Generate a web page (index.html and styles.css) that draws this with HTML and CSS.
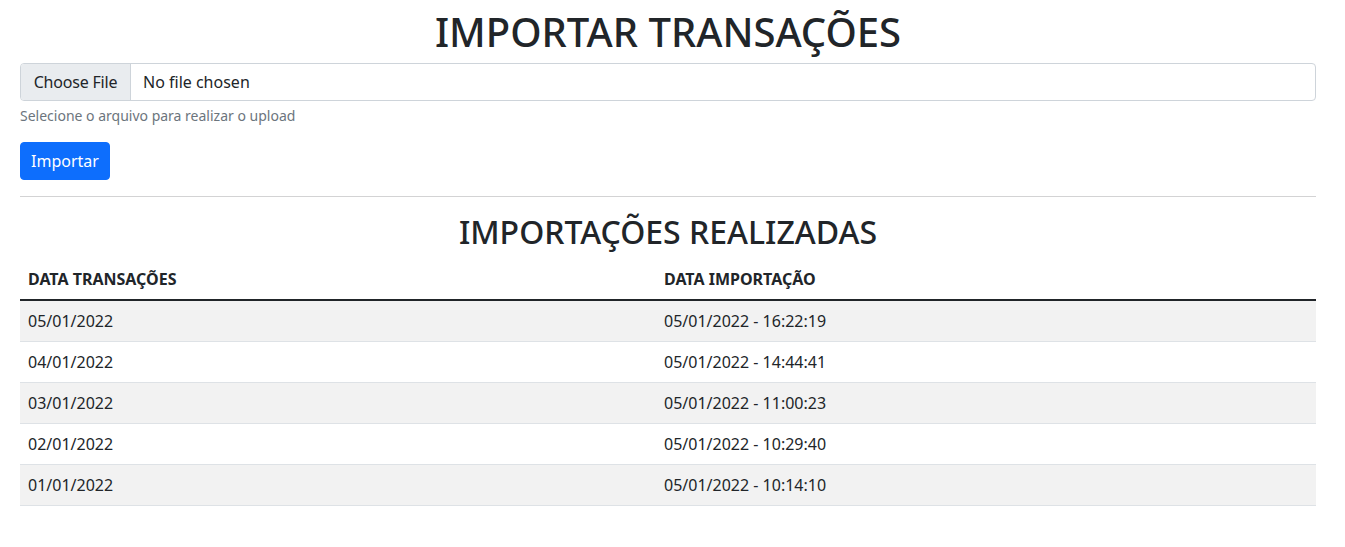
FILE: index.html
```html
<!DOCTYPE html>
<html lang="pt-BR">
<head>
<meta charset="utf-8">
<title>Importar Transações</title>
<link rel="stylesheet" href="styles.css">
</head>
<body>
<main class="page">
  <h1 class="title">IMPORTAR TRANSAÇÕES</h1>
  <form class="upload">
    <div class="file-input">
      <span class="file-btn">Choose File</span>
      <span class="file-name">No file chosen</span>
    </div>
    <div class="form-text">Selecione o arquivo para realizar o upload</div>
    <button type="button" class="btn-primary">Importar</button>
  </form>
  <hr class="divider">
  <h2 class="subtitle">IMPORTAÇÕES REALIZADAS</h2>
  <table class="table">
    <thead>
      <tr><th class="col-first">DATA TRANSAÇÕES</th><th>DATA IMPORTAÇÃO</th></tr>
    </thead>
    <tbody>
      <tr><td>05/01/2022</td><td>05/01/2022 - 16:22:19</td></tr>
      <tr><td>04/01/2022</td><td>05/01/2022 - 14:44:41</td></tr>
      <tr><td>03/01/2022</td><td>05/01/2022 - 11:00:23</td></tr>
      <tr><td>02/01/2022</td><td>05/01/2022 - 10:29:40</td></tr>
      <tr><td>01/01/2022</td><td>05/01/2022 - 10:14:10</td></tr>
    </tbody>
  </table>
</main>
</body>
</html>
```
FILE: styles.css
```css
* { box-sizing: border-box; }
html, body { margin: 0; padding: 0; background: #fff; }
body {
  font-family: "Noto Sans", "Open Sans", sans-serif;
  font-size: 16px;
  line-height: 1.5;
  color: #212529;
}
.page {
  width: 1296px;
  margin: 0 0 0 20px;
  padding-top: 8px;
}
.title {
  margin: 0 0 7px;
  font-size: 40px;
  font-weight: 500;
  line-height: 1.2;
  text-align: center;
}
.upload { margin: 0; }
.file-input {
  display: flex;
  height: 38px;
  border: 1px solid #ced4da;
  border-radius: 4px;
  overflow: hidden;
}
.file-btn {
  display: flex;
  align-items: center;
  justify-content: center;
  flex: 0 0 110px;
  white-space: nowrap;
  letter-spacing: -0.2px;
  background: #e9ecef;
  border-right: 1px solid #ced4da;
}
.file-name {
  display: flex;
  align-items: center;
  padding: 0 12px;
  white-space: nowrap;
}
.form-text {
  margin-top: 4px;
  font-size: 14px;
  line-height: 21px;
  color: #6c757d;
}
.btn-primary {
  display: block;
  margin-top: 16px;
  height: 38px;
  width: 90px;
  padding: 0;
  background: #0d6efd;
  color: #fff;
  border: 1px solid #0d6efd;
  border-radius: 4px;
  font-family: inherit;
  font-size: 16px;
  line-height: 1.5;
  white-space: nowrap;
}
.divider {
  margin: 16px 0;
  border: 0;
  border-top: 1px solid #d3d3d4;
}
.subtitle {
  margin: 0 0 8px;
  font-size: 32px;
  font-weight: 500;
  line-height: 1.2;
  text-align: center;
}
.table {
  width: 100%;
  border-collapse: collapse;
}
.table th, .table td {
  padding: 8px;
  text-align: left;
  border-bottom: 1px solid #dee2e6;
}
.table th {
  font-weight: 700;
  border-bottom: 2px solid #212529;
}
.col-first { width: 636px; }
.table tbody tr:nth-child(odd) td { background: #f2f2f2; }
```
